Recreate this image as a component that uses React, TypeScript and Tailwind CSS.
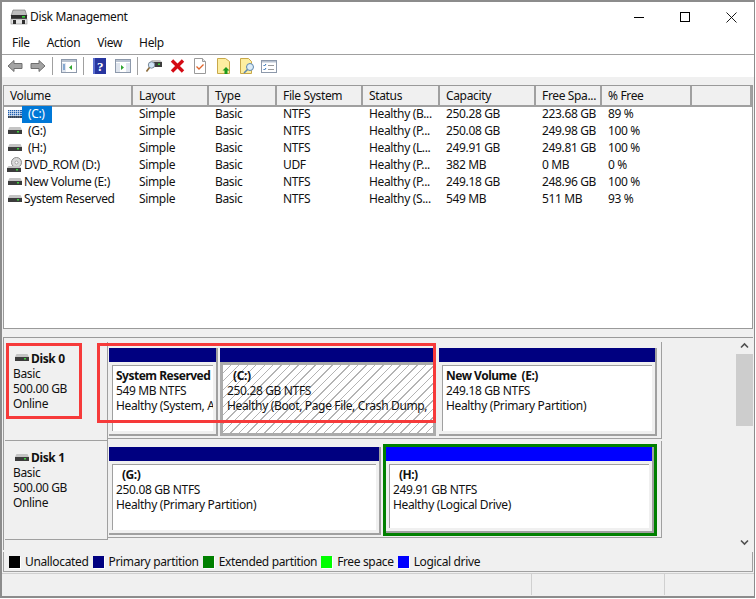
const rowGrid = "grid grid-cols-[129px_76px_68px_86px_77px_96px_66px_90px_1fr]";

const volumes = [
  { name: "(C:)", icon: "striped", layout: "Simple", type: "Basic", fs: "NTFS", status: "Healthy (B...", cap: "250.28 GB", free: "223.68 GB", pct: "89 %", selected: true },
  { name: "(G:)", icon: "hdd", layout: "Simple", type: "Basic", fs: "NTFS", status: "Healthy (P...", cap: "250.08 GB", free: "249.98 GB", pct: "100 %", indent: true },
  { name: "(H:)", icon: "hdd", layout: "Simple", type: "Basic", fs: "NTFS", status: "Healthy (L...", cap: "249.91 GB", free: "249.81 GB", pct: "100 %", indent: true },
  { name: "DVD_ROM (D:)", icon: "dvd", layout: "Simple", type: "Basic", fs: "UDF", status: "Healthy (P...", cap: "382 MB", free: "0 MB", pct: "0 %" },
  { name: "New Volume (E:)", icon: "hdd", layout: "Simple", type: "Basic", fs: "NTFS", status: "Healthy (P...", cap: "249.18 GB", free: "248.96 GB", pct: "100 %" },
  { name: "System Reserved", icon: "hdd", layout: "Simple", type: "Basic", fs: "NTFS", status: "Healthy (S...", cap: "549 MB", free: "511 MB", pct: "93 %" },
];

const headers = ["Volume", "Layout", "Type", "File System", "Status", "Capacity", "Free Spa...", "% Free", ""];

const legend = [
  { color: "bg-black", label: "Unallocated" },
  { color: "bg-[#000080]", label: "Primary partition" },
  { color: "bg-[#008000]", label: "Extended partition" },
  { color: "bg-[#00ff00]", label: "Free space" },
  { color: "bg-[#0000ff]", label: "Logical drive" },
];

function HddIcon({ striped }: { striped?: boolean }) {
  if (striped) {
    return (
      <svg width="14" height="10" viewBox="0 0 14 10" className="shrink-0">
        <rect x="0" y="1" width="14" height="8" fill="#1f5fb0" />
        <path d="M0 2.5h14M0 4.5h14M0 6.5h14M1.5 1v8M3.5 1v8M5.5 1v8M7.5 1v8M9.5 1v8M11.5 1v8" stroke="#dfe9f5" strokeWidth="0.7" />
        <rect x="0" y="7" width="14" height="2" fill="#3a3a3a" opacity="0.7" />
      </svg>
    );
  }
  return (
    <svg width="14" height="10" viewBox="0 0 14 10" className="shrink-0">
      <path d="M1.5 1h11L14 4H0z" fill="#c4c4c4" />
      <rect x="0" y="4" width="14" height="4" fill="#3c3c3c" />
      <rect x="9" y="5" width="2" height="1.5" fill="#3fd03f" />
    </svg>
  );
}

function DvdIcon() {
  return (
    <svg width="16" height="16" viewBox="0 0 16 16" className="shrink-0">
      <circle cx="9.5" cy="5.5" r="5" fill="#d8d8d8" stroke="#8a8a8a" />
      <circle cx="9.5" cy="5.5" r="1.5" fill="#fff" stroke="#8a8a8a" strokeWidth="0.7" />
      <path d="M1.5 9h11l1.5 2H0z" fill="#c4c4c4" />
      <rect x="0" y="11" width="14" height="4" fill="#3c3c3c" />
      <rect x="9" y="12" width="2" height="1.5" fill="#3fd03f" />
    </svg>
  );
}

function AppIcon() {
  return (
    <svg width="18" height="16" viewBox="0 0 18 16">
      <path d="M3 1h12l2 6H1z" fill="#bdbdbd" stroke="#6a6a6a" strokeWidth="0.6" />
      <rect x="1" y="6" width="16" height="4" fill="#2e2e2e" />
      <rect x="12" y="7" width="3" height="1.6" fill="#36d536" />
      <rect x="1" y="10" width="16" height="5" fill="#e6e6e6" stroke="#8a8a8a" strokeWidth="0.6" />
      <rect x="3" y="11" width="3" height="4" fill="#2e2e2e" />
      <rect x="12" y="11" width="3" height="4" fill="#2e2e2e" />
    </svg>
  );
}

function WindowIcon({ right }: { right?: boolean }) {
  return (
    <svg width="16" height="14" viewBox="0 0 16 14" className={right ? "ml-[9px]" : "ml-[8px]"}>
      <rect x="0.5" y="0.5" width="15" height="13" fill="#fff" stroke="#8d99ab" />
      <rect x="1" y="1" width="14" height="2" fill="#b8c2d0" />
      {right ? (
        <>
          <path d="M1 4h4v9H1zM11 4h4v9h-4z" fill="#dfe5ee" />
          <path d="M6 6l3 2.5L6 11z" fill="#2fa52f" />
        </>
      ) : (
        <>
          <path d="M1 4h4v9H1z" fill="#dfe5ee" />
          <path d="M2 6h2M2 8h2M2 10h2" stroke="#2f6fb5" />
          <path d="M11 6L8 8.5l3 2.5z" fill="#2fa52f" />
        </>
      )}
    </svg>
  );
}

function Sep() {
  return <div className="ml-[6px] h-[18px] w-px bg-[#a0a0a0]" />;
}

function Toolbar() {
  return (
    <div className="flex h-[23px] items-center border-t border-[#a0a0a0] bg-white pl-[5px]">
      <svg width="16" height="14" viewBox="0 0 16 14">
        <path d="M1 7l6-5.5V4.500h8v5H7v3z" fill="#a3a3a3" stroke="#6f6f6f" />
      </svg>
      <svg width="16" height="14" viewBox="0 0 16 14" className="ml-[7px]">
        <path d="M15 7L9 1.500V4.500H1v5h8v3z" fill="#a3a3a3" stroke="#6f6f6f" />
      </svg>
      <Sep />
      <WindowIcon />
      <Sep />
      <svg width="13" height="16" viewBox="0 0 13 16" className="ml-[9px]">
        <rect width="13" height="16" fill="#27359f" />
        <rect x="0" y="0" width="2" height="16" fill="#5b6fd0" />
        <text x="7" y="13" fontSize="13" fontWeight="700" textAnchor="middle" fill="#fff" fontFamily="Liberation Serif, serif">?</text>
      </svg>
      <WindowIcon right />
      <Sep />
      <svg width="16" height="14" viewBox="0 0 16 14" className="ml-[8px]">
        <path d="M4 3h12v5H4z" fill="#3c3c3c" />
        <path d="M6 1h8l2 2H4z" fill="#c4c4c4" />
        <rect x="12" y="4.500" width="2" height="1.5" fill="#3fd03f" />
        <circle cx="5.5" cy="6" r="3.2" fill="#cfe3f5" stroke="#7b8b9b" />
        <path d="M3.5 8.500L0.5 12.500" stroke="#8a6a3a" strokeWidth="1.6" />
      </svg>
      <svg width="15" height="14" viewBox="0 0 15 14" className="ml-[8px]">
        <path d="M2 1.500l11 11M13 1.500l-11 11" stroke="#d40a14" strokeWidth="3.4" />
      </svg>
      <svg width="12" height="16" viewBox="0 0 12 16" className="ml-[9px]">
        <path d="M0.5 0.500h8l3 3v12H0.5z" fill="#fff" stroke="#9a9a9a" />
        <path d="M8.5 0.500v3h3" fill="#e6e6e6" stroke="#9a9a9a" />
        <path d="M2.5 8.500l2.500 2.500 4.500-4.500" fill="none" stroke="#e0642a" strokeWidth="1.3" />
      </svg>
      <svg width="13" height="16" viewBox="0 0 13 16" className="ml-[11px]">
        <path d="M0.5 0.500h8l4 3v12H0.5z" fill="#fdeea0" stroke="#c8a84a" />
        <path d="M9 9l3.500 3.500H10.500V16h-3v-3.500H5.500z" fill="#1d9a1d" />
      </svg>
      <svg width="15" height="16" viewBox="0 0 15 16" className="ml-[10px]">
        <path d="M0.5 0.500h8l3 3v12H0.5z" fill="#fdeea0" stroke="#c8a84a" />
        <circle cx="10" cy="9" r="3.5" fill="#dcecf8" stroke="#5d87ad" />
        <path d="M7.5 11.500L4 15" stroke="#5d87ad" strokeWidth="1.6" />
      </svg>
      <svg width="16" height="14" viewBox="0 0 16 14" className="ml-[6px]">
        <rect x="0.5" y="1.5" width="15" height="12" fill="#fff" stroke="#8d99ab" />
        <rect x="1" y="2" width="14" height="1.5" fill="#b8c2d0" />
        <path d="M2.5 6l1 1 1.500-2M2.5 10l1 1 1.500-2" fill="none" stroke="#2f6fb5" />
        <path d="M7 6.500h6M7 10.500h6" stroke="#9a9a9a" />
      </svg>
    </div>
  );
}

function VolumeList() {
  return (
    <div className="mx-px h-[244px] border border-[#9a9a9a] bg-white">
      <div className={`${rowGrid} h-[19px] bg-[#f0f0f0]`}>
        {headers.map((h, i) => (
          <div key={i} className={`flex items-center border-r-2 border-b-2 border-[#a0a0a0] pt-px pl-[6px] ${i === 8 ? "border-r-0" : ""}`}>
            {h}
          </div>
        ))}
      </div>
      <div>
        {volumes.map((v) => (
          <div key={v.name} className={`${rowGrid} h-[17px] items-center`}>
            <div className="flex items-center pl-[3px]">
              <div className="flex w-[16px] justify-center">
                {v.icon === "dvd" ? <DvdIcon /> : <HddIcon striped={v.icon === "striped"} />}
              </div>
              {v.selected ? (
                <span className="-ml-px flex h-[17px] w-[30px] items-center bg-[#0078d7] pl-[6px] text-white">{v.name}</span>
              ) : (
                <span className={v.indent ? "ml-[5px]" : "ml-px"}>{v.name}</span>
              )}
            </div>
            <div className="pl-[6px]">{v.layout}</div>
            <div className="pl-[6px]">{v.type}</div>
            <div className="pl-[6px]">{v.fs}</div>
            <div className="pl-[6px]">{v.status}</div>
            <div className="pl-[6px]">{v.cap}</div>
            <div className="pl-[6px]">{v.free}</div>
            <div className="pl-[6px]">{v.pct}</div>
            <div />
          </div>
        ))}
      </div>
    </div>
  );
}

function DiskLabel({ name, top, title }: { name: string; top: string; title: string }) {
  return (
    <div className={`${top} h-full w-[103px] shrink-0 border-r border-b border-[#a0a0a0] pl-[8px] leading-[15px]`}>
      <div className={`${title} flex items-center gap-[2px] font-bold`}>
        <div className="ml-[2px]">
          <HddIcon />
        </div>
        <span>{name}</span>
      </div>
      <div>Basic</div>
      <div>500.00 GB</div>
      <div>Online</div>
    </div>
  );
}

function Partition({ w, head, name, lines, boldIndent, hatched }: { w: string; head: string; name: string; lines: string[]; boldIndent?: boolean; hatched?: boolean }) {
  if (hatched) {
    return (
      <div className={`${w} flex h-full shrink-0 flex-col overflow-hidden`}>
        <div className={`${head} h-[14px] shrink-0`} />
        <div className="flex-1 overflow-hidden border-[3px] border-[#ababab] bg-[repeating-linear-gradient(135deg,#fff_0,#fff_5px,#b4b4b4_5px,#b4b4b4_6px)] pl-[4px] pt-[3px] leading-[15px] whitespace-pre">
          <div className={`font-bold ${boldIndent ? "pl-[6px]" : ""}`}>{name}</div>
          {lines.map((l) => <div key={l}>{l}</div>)}
        </div>
      </div>
    );
  }
  return (
    <div className={`${w} flex h-full shrink-0 flex-col overflow-hidden border-r-2 border-b-2 border-[#a0a0a0]`}>
      <div className={`${head} h-[14px] shrink-0`} />
      <div className="min-h-0 flex-1 bg-[#f0f0f0] p-[3px]">
        <div className="h-full overflow-hidden border-t border-l border-[#a0a0a0] bg-white pl-[3px] pt-[2px] leading-[15px] whitespace-pre">
          <div className={`font-bold tracking-[-0.5px] ${boldIndent ? "pl-[6px]" : ""}`}>{name}</div>
          {lines.map((l) => <div key={l}>{l}</div>)}
        </div>
      </div>
    </div>
  );
}

function DiskPanel() {
  return (
    <div className="mx-px flex h-[213px] border-t border-l border-[#9a9a9a]">
      <div className="flex-1 pl-px pt-[4px]">
        <div className="flex h-[99px]">
          <DiskLabel name="Disk 0" top="pt-[8px]" title="h-[16px]" />
          <div className="flex h-[97px] w-[554px] gap-[2px] border-r border-b border-[#a0a0a0] pl-px pr-[3px] pt-[6px] pb-[2px]">
            <Partition w="w-[109px]" head="bg-[#000080]" name="System Reserved" lines={["549 MB NTFS", "Healthy (System, A"]} />
            <Partition w="w-[216px]" head="bg-[#000080]" name="(C:)" boldIndent hatched lines={["250.28 GB NTFS", "Healthy (Boot, Page File, Crash Dump,"]} />
            <Partition w="ml-px w-[218px]" head="bg-[#000080]" name="New Volume  (E:)" lines={["249.18 GB NTFS", "Healthy (Primary Partition)"]} />
          </div>
        </div>
        <div className="flex h-[99px]">
          <DiskLabel name="Disk 1" top="pt-[9px]" title="h-[15px]" />
          <div className="flex h-[97px] w-[554px] gap-[2px] border-r border-b border-[#a0a0a0] pl-px pr-[3px] pt-[6px] pb-[2px]">
            <Partition w="w-[272px]" head="bg-[#000080]" name="(G:)" boldIndent lines={["250.08 GB NTFS", "Healthy (Primary Partition)"]} />
            <div className="-mt-[3px] -mb-px w-[274px] shrink-0 border-[3px] border-[#008000]">
              <Partition w="w-full" head="bg-[#0000ff]" name="(H:)" boldIndent lines={["249.91 GB NTFS", "Healthy (Logical Drive)"]} />
            </div>
          </div>
        </div>
      </div>
      <div className="flex w-[17px] shrink-0 flex-col items-center">
        <svg width="17" height="16" viewBox="0 0 17 16">
          <path d="M5 9.500l3.500-3.500 3.500 3.500" fill="none" stroke="#505050" strokeWidth="1.6" />
        </svg>
        <div className="h-[72px] w-full bg-[#cdcdcd]" />
        <div className="flex-1" />
        <svg width="17" height="16" viewBox="0 0 17 16">
          <path d="M5 6.500l3.500 3.500 3.500-3.500" fill="none" stroke="#505050" strokeWidth="1.6" />
        </svg>
      </div>
    </div>
  );
}

function Legend() {
  return (
    <div className="mx-px mt-[2px] flex h-[20px] items-center gap-[4px] border-r border-b border-l border-[#a0a0a0] pl-[5px]">
      {legend.map((l) => (
        <div key={l.label} className="flex items-center gap-[5px]">
          <div className={`${l.color} h-[12px] w-[11px] shadow-[1px_1px_0_#fff]`} />
          <span>{l.label}</span>
        </div>
      ))}
    </div>
  );
}

export default function App() {
  return (
    <div className="relative flex h-[598px] w-[755px] flex-col border-2 border-r border-b-2 border-[#8c8c8c] bg-white font-['Noto_Sans',sans-serif] text-[12px] tracking-[-0.35px] text-[#111]">
      <div className="flex h-[30px] items-center justify-between pl-[8px]">
        <div className="flex items-center gap-[2px]">
          <AppIcon />
          <span>Disk Management</span>
        </div>
        <div className="flex items-center">
          <div className="flex h-[30px] w-[46px] items-center justify-center">
            <div className="h-px w-[10px] bg-black" />
          </div>
          <div className="flex h-[30px] w-[46px] items-center justify-center">
            <div className="h-[10px] w-[10px] border border-black" />
          </div>
          <div className="flex h-[30px] w-[46px] items-center justify-center">
            <svg width="11" height="11" viewBox="0 0 11 11">
              <path d="M0.5 0.500l10 10M10.5 0.500l-10 10" stroke="#000" strokeWidth="0.9" />
            </svg>
          </div>
        </div>
      </div>
      <div className="flex h-[22px] items-center gap-[17px] pl-[10px]">
        <span>File</span>
        <span>Action</span>
        <span>View</span>
        <span>Help</span>
      </div>
      <Toolbar />
      <div className="flex-1 bg-[#f0f0f0] pt-[8px]">
        <VolumeList />
        <div className="h-[8px]" />
        <DiskPanel />
        <Legend />
        <div className="mt-px grid h-[22px] grid-cols-[530px_133px_1fr] border-t border-[#d0d0d0]">
          <div className="border-r border-[#d0d0d0]" />
          <div className="border-r border-[#d0d0d0]" />
          <div />
        </div>
      </div>
      <div className="absolute top-[341px] left-[4px] h-[76px] w-[76px] border-[3px] border-[#f63a3a]" />
      <div className="absolute top-[341px] left-[95px] h-[80px] w-[339px] border-[3px] border-[#f63a3a]" />
    </div>
  );
}
